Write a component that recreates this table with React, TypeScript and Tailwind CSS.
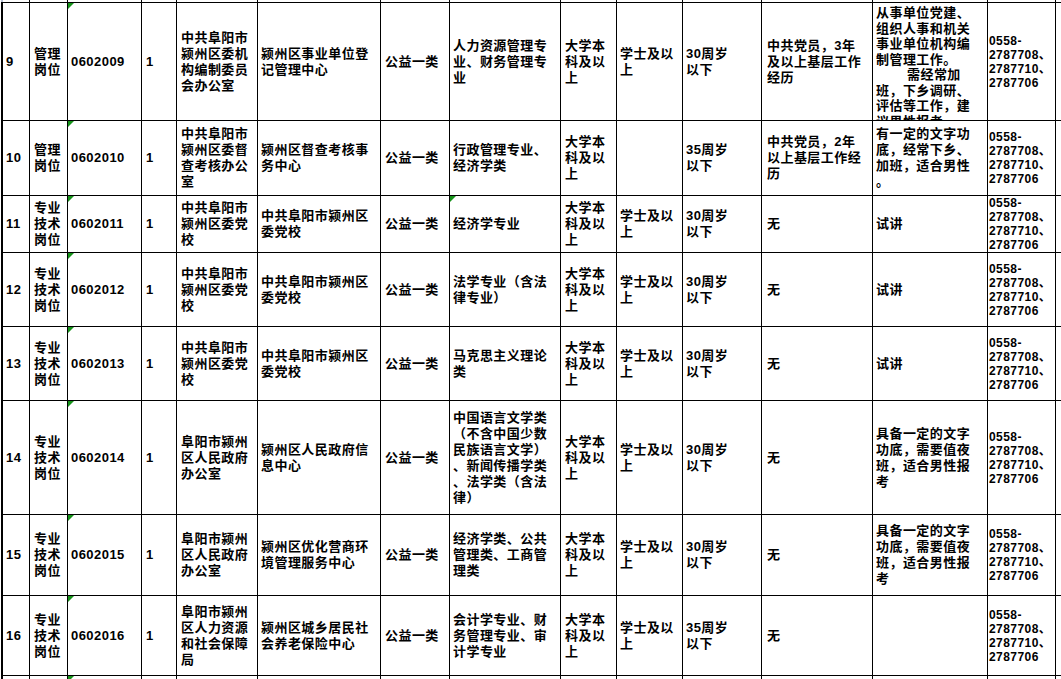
import type { ReactNode } from 'react';

type Row = {
  no: string;
  kind: string[];
  code: string;
  count: string;
  dept: string[];
  unit: string[];
  type: string;
  major: string[];
  edu: string[];
  degree: string[];
  age: string[];
  other: string[];
  note: string[];
  h: string;
  majorMark?: boolean;
};

const GRID =
  'grid grid-rows-1 grid-cols-[27px_38px_74px_35px_81px_123px_69px_111px_56px_66px_79px_111px_115px_68px] border-l-2 border-[#b8c0d4]';

const PHONE = ['0558-', '2787708、', '2787710、', '2787706'];
const MGMT = ['管理', '岗位'];
const TECH = ['专业', '技术', '岗位'];
const EDU = ['大学本', '科及以', '上'];
const DEG = ['学士及以', '上'];
const SCHOOL_DEPT = ['中共阜阳市', '颍州区委党', '校'];
const SCHOOL_UNIT = ['中共阜阳市颍州区', '委党校'];
const GOV_DEPT = ['阜阳市颍州', '区人民政府', '办公室'];
const NIGHT = ['具备一定的文字', '功底，需要值夜', '班，适合男性报', '考'];

const ROWS: Row[] = [
  {
    no: '10',
    kind: MGMT,
    code: '0602010',
    count: '1',
    dept: ['中共阜阳市', '颍州区委督', '查考核办公', '室'],
    unit: ['颍州区督查考核事', '务中心'],
    type: '公益一类',
    major: ['行政管理专业、', '经济学类'],
    edu: EDU,
    degree: [],
    age: ['35周岁', '以下'],
    other: ['中共党员，2年', '以上基层工作经', '历'],
    note: ['有一定的文字功', '底，经常下乡、', '加班，适合男性', '。'],
    h: 'h-[75px]',
  },
  {
    no: '11',
    kind: TECH,
    code: '0602011',
    count: '1',
    dept: SCHOOL_DEPT,
    unit: SCHOOL_UNIT,
    type: '公益一类',
    major: ['经济学专业'],
    edu: EDU,
    degree: DEG,
    age: ['30周岁', '以下'],
    other: ['无'],
    note: ['试讲'],
    h: 'h-[57px]',
    majorMark: true,
  },
  {
    no: '12',
    kind: TECH,
    code: '0602012',
    count: '1',
    dept: SCHOOL_DEPT,
    unit: SCHOOL_UNIT,
    type: '公益一类',
    major: ['法学专业（含法', '律专业）'],
    edu: EDU,
    degree: DEG,
    age: ['30周岁', '以下'],
    other: ['无'],
    note: ['试讲'],
    h: 'h-[74px]',
  },
  {
    no: '13',
    kind: TECH,
    code: '0602013',
    count: '1',
    dept: SCHOOL_DEPT,
    unit: SCHOOL_UNIT,
    type: '公益一类',
    major: ['马克思主义理论', '类'],
    edu: EDU,
    degree: DEG,
    age: ['30周岁', '以下'],
    other: ['无'],
    note: ['试讲'],
    h: 'h-[74px]',
  },
  {
    no: '14',
    kind: TECH,
    code: '0602014',
    count: '1',
    dept: GOV_DEPT,
    unit: ['颍州区人民政府信', '息中心'],
    type: '公益一类',
    major: ['中国语言文学类', '（不含中国少数', '民族语言文学）', '、新闻传播学类', '、法学类（含法', '律）'],
    edu: EDU,
    degree: DEG,
    age: ['30周岁', '以下'],
    other: ['无'],
    note: NIGHT,
    h: 'h-[114px]',
  },
  {
    no: '15',
    kind: TECH,
    code: '0602015',
    count: '1',
    dept: GOV_DEPT,
    unit: ['颍州区优化营商环', '境管理服务中心'],
    type: '公益一类',
    major: ['经济学类、公共', '管理类、工商管', '理类'],
    edu: EDU,
    degree: DEG,
    age: ['30周岁', '以下'],
    other: ['无'],
    note: NIGHT,
    h: 'h-[81px]',
  },
  {
    no: '16',
    kind: TECH,
    code: '0602016',
    count: '1',
    dept: ['阜阳市颍州', '区人力资源', '和社会保障', '局'],
    unit: ['颍州区城乡居民社', '会养老保险中心'],
    type: '公益一类',
    major: ['会计学专业、财', '务管理专业、审', '计学专业'],
    edu: EDU,
    degree: DEG,
    age: ['35周岁', '以下'],
    other: ['无'],
    note: [],
    h: 'h-[80px]',
  },
];

function Mark() {
  return (
    <span className="absolute left-0 top-0 h-[6px] w-[6px] bg-[#16931a] [clip-path:polygon(0_0,100%_0,0_100%)]" />
  );
}

function Cell({
  lines,
  pad = 'pl-[3px]',
  mark,
  small,
}: {
  lines: string[];
  pad?: string;
  mark?: boolean;
  small?: boolean;
}) {
  return (
    <div
      className={`relative flex min-h-0 flex-col justify-center overflow-hidden border-r border-black ${pad} ${
        small ? 'text-[12px] leading-[14px]' : 'text-[13px] leading-[16px]'
      }`}
    >
      {mark && <Mark />}
      {lines.map((l, i) => (
        <div key={i} className="whitespace-nowrap">
          {l}
        </div>
      ))}
    </div>
  );
}

function Line({ children }: { children?: ReactNode }) {
  return <div className="relative border-r border-black">{children}</div>;
}

function Filler({ h, top, mark }: { h: string; top?: boolean; mark?: boolean }) {
  return (
    <div className={`${GRID} ${h} ${top ? 'border-t border-black' : ''}`}>
      <Line />
      <Line />
      <Line>{mark && <Mark />}</Line>
      {Array.from({ length: 11 }).map((_, i) => (
        <Line key={i} />
      ))}
    </div>
  );
}

function DataRow({ r }: { r: Row }) {
  return (
    <div className={`${GRID} ${r.h} border-t border-black`}>
      <Cell lines={[r.no]} />
      <Cell lines={r.kind} pad="pl-[4px]" />
      <Cell lines={[r.code]} mark />
      <Cell lines={[r.count]} pad="pl-[4px]" />
      <Cell lines={r.dept} pad="pl-[4px]" />
      <Cell lines={r.unit} />
      <Cell lines={[r.type]} pad="pl-[4px]" />
      <Cell lines={r.major} mark={r.majorMark} />
      <Cell lines={r.edu} pad="pl-[4px]" />
      <Cell lines={r.degree} />
      <Cell lines={r.age} />
      <Cell lines={r.other} pad="pl-[5px]" />
      <Cell lines={r.note} />
      <Cell lines={PHONE} pad="pl-px" small />
    </div>
  );
}

export default function App() {
  return (
    <div className="h-[679px] w-[1061px] overflow-hidden bg-white pl-px font-['Liberation_Sans','Noto_Sans_CJK_SC',sans-serif] font-bold tracking-[0.45px] text-black">
      <Filler h="h-[2px]" />

      <div className={`${GRID} h-[118px] border-t border-black`}>
        <Cell lines={['9']} />
        <Cell lines={MGMT} pad="pl-[4px]" />
        <Cell lines={['0602009']} mark />
        <Cell lines={['1']} pad="pl-[4px]" />
        <Cell lines={['中共阜阳市', '颍州区委机', '构编制委员', '会办公室']} pad="pl-[4px]" />
        <Cell lines={['颍州区事业单位登', '记管理中心']} />
        <Cell lines={['公益一类']} pad="pl-[4px]" />
        <Cell lines={['人力资源管理专', '业、财务管理专', '业']} />
        <Cell lines={EDU} pad="pl-[4px]" />
        <Cell lines={DEG} />
        <Cell lines={['30周岁', '以下']} />
        <Cell lines={['中共党员，3年', '及以上基层工作', '经历']} pad="pl-[5px]" />
        <div className="min-h-0 overflow-hidden border-r border-black pl-[3px] pt-[2px] text-[13px] leading-[15.5px]">
          <div className="whitespace-nowrap">从事单位党建、</div>
          <div className="whitespace-nowrap">组织人事和机关</div>
          <div className="whitespace-nowrap">事业单位机构编</div>
          <div className="whitespace-nowrap">制管理工作。</div>
          <div className="whitespace-nowrap pl-[31px]">需经常加</div>
          <div className="whitespace-nowrap">班，下乡调研、</div>
          <div className="whitespace-nowrap">评估等工作，建</div>
          <div className="whitespace-nowrap">议男性报考。</div>
        </div>
        <Cell lines={PHONE} pad="pl-px" small />
      </div>

      {ROWS.map((r) => (
        <DataRow key={r.no} r={r} />
      ))}

      <Filler h="h-[10px]" top mark />
    </div>
  );
}
